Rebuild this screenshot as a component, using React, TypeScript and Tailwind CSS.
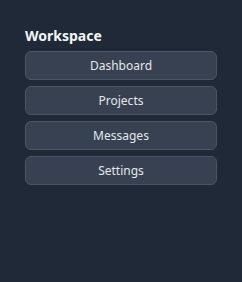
export default function App() {
  const items = ["Dashboard", "Projects", "Messages", "Settings"];
  return (
    <div
      className="h-[282px] w-[242px] bg-[#1f2937] pl-[25px] pr-[25px] pt-[26px]"
      style={{ fontFamily: '"Noto Sans", sans-serif' }}
    >
      <h2 className="text-sm font-bold leading-5 text-gray-100">Workspace</h2>
      <nav className="mt-[5px] flex flex-col gap-[6px]">
        {items.map((item) => (
          <button
            key={item}
            className="h-[29px] w-full rounded-md border border-[#4b5563] bg-[#374151] text-xs text-gray-200"
          >
            {item}
          </button>
        ))}
      </nav>
    </div>
  );
}
